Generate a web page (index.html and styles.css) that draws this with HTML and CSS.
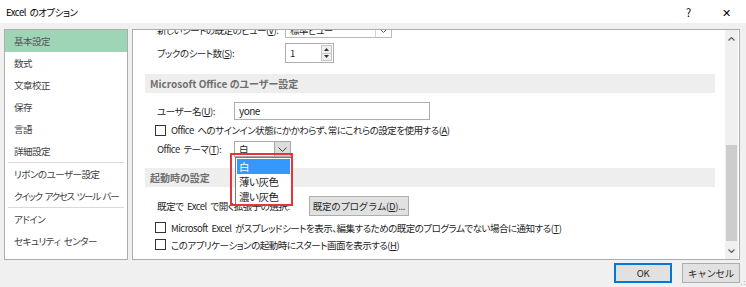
FILE: index.html
```html
<!DOCTYPE html>
<html lang="ja">
<head>
    <meta charset="UTF-8">
    <title>Excel のオプション</title>
    <link rel="stylesheet" href="styles.css">
</head>
<body>
    <div class="titlebar">
        <span class="title">Excel のオプション</span>
        <span class="help">?</span>
        <span class="close">✕</span>
    </div>

    <div class="main">
        <ul class="nav">
            <li class="active">基本設定</li>
            <li>数式</li>
            <li>文章校正</li>
            <li>保存</li>
            <li>言語</li>
            <li>詳細設定</li>
            <li class="sep"></li>
            <li>リボンのユーザー設定</li>
            <li class="tight">クイック アクセス ツール バー</li>
            <li class="sep"></li>
            <li>アドイン</li>
            <li>セキュリティ センター</li>
        </ul>

        <div class="panel">
            <div class="scroll">
                <div class="row first">
                    <span class="label wide">新しいシートの既定のビュー(<u>V</u>):</span>
                    <div class="select view-select">
                        <span class="value">標準ビュー</span>
                        <span class="arrow"><svg width="9" height="5" viewBox="0 0 9 5"><polyline points="0.5,0.5 4.5,4.5 8.5,0.5" fill="none" stroke="#606060" stroke-width="1"/></svg></span>
                    </div>
                </div>
                <div class="row sheets">
                    <span class="label wide">ブックのシート数(<u>S</u>):</span>
                    <div class="spin">
                        <span class="value">1</span>
                        <span class="spin-btns">
                            <span><svg width="5" height="3" viewBox="0 0 5 3"><polygon points="0,3 2.5,0 5,3" fill="#333"/></svg></span>
                            <span><svg width="5" height="3" viewBox="0 0 5 3"><polygon points="0,0 5,0 2.5,3" fill="#333"/></svg></span>
                        </span>
                    </div>
                </div>

                <div class="section">Microsoft Office のユーザー設定</div>

                <div class="row user">
                    <span class="label">ユーザー名(<u>U</u>):</span>
                    <div class="textbox">yone</div>
                </div>
                <div class="row check">
                    <span class="box"></span>
                    <span>Office へのサインイン状態にかかわらず、常にこれらの設定を使用する(<u>A</u>)</span>
                </div>
                <div class="row theme">
                    <span class="label">Office テーマ(<u>T</u>):</span>
                    <div class="select theme-select">
                        <span class="value">白</span>
                        <span class="arrow"><svg width="9" height="5" viewBox="0 0 9 5"><polyline points="0.5,0.5 4.5,4.5 8.5,0.5" fill="none" stroke="#404040" stroke-width="1"/></svg></span>
                        <ul class="dropdown">
                            <li class="picked">白</li>
                            <li>薄い灰色</li>
                            <li>濃い灰色</li>
                        </ul>
                        <div class="mark"></div>
                    </div>
                </div>

                <div class="section start">起動時の設定</div>

                <div class="row program">
                    <span class="label">既定で Excel で開く拡張子の選択:</span>
                    <button class="btn default-btn">既定のプログラム(<u>D</u>)...</button>
                </div>
                <div class="row check low">
                    <span class="box"></span>
                    <span>Microsoft Excel がスプレッドシートを表示、編集するための既定のプログラムでない場合に通知する(<u>T</u>)</span>
                </div>
                <div class="row check low">
                    <span class="box"></span>
                    <span>このアプリケーションの起動時にスタート画面を表示する(<u>H</u>)</span>
                </div>
            </div>

            <div class="scrollbar">
                <span class="sb-arrow"><svg width="7" height="4" viewBox="0 0 7 4"><polyline points="0.5,3.5 3.5,0.5 6.5,3.5" fill="none" stroke="#606060" stroke-width="1.2"/></svg></span>
                <div class="track"><div class="thumb"></div></div>
                <span class="sb-arrow"><svg width="7" height="4" viewBox="0 0 7 4"><polyline points="0.5,0.5 3.5,3.5 6.5,0.5" fill="none" stroke="#606060" stroke-width="1.2"/></svg></span>
            </div>
        </div>
    </div>

    <div class="footer">
        <button class="btn ok">OK</button>
        <button class="btn">キャンセル</button>
        <svg class="grip" width="5" height="5" viewBox="0 0 5 5">
            <rect x="3" y="0" width="1" height="1" fill="#bbb"/>
            <rect x="0" y="3" width="1" height="1" fill="#bbb"/>
            <rect x="3" y="3" width="1" height="1" fill="#bbb"/>
        </svg>
    </div>
</body>
</html>
```

FILE: styles.css
```css
body {
    margin: 0;
    width: 746px;
    height: 287px;
    overflow: hidden;
    background-color: #f0f0f0;
    font-family: "Noto Sans CJK JP", sans-serif;
    font-feature-settings: "palt";
    font-size: 9.5px;
    letter-spacing: -0.5px;
    word-spacing: 2px;
    color: #1e1e1e;
}

u {
    text-underline-offset: 1px;
}

.titlebar {
    height: 23px;
    background-color: #ffffff;
    display: flex;
    align-items: center;
    color: #000;
}

.title {
    margin-left: 6px;
    flex: 1;
}

.help {
    width: 12px;
    font-size: 11px;
}

.close {
    width: 10px;
    margin-left: 24px;
    margin-right: 14px;
    font-size: 11px;
}

.main {
    display: flex;
    gap: 4px;
    padding: 6px 6px 0 4px;
    height: 231px;
}

.nav {
    list-style: none;
    margin: 0;
    padding: 0;
    width: 122px;
    background-color: #ffffff;
    border: 1px solid #adadad;
    color: #404040;
}

.nav li {
    height: 22px;
    line-height: 22px;
    padding-left: 9px;
    white-space: nowrap;
}

.nav li.tight {
    letter-spacing: -1.3px;
}

.nav li.active {
    background-color: #9fd5b7;
    color: #555;
}

.nav li.sep {
    height: 1px;
    margin: 0 3px;
    padding: 0;
    background-color: #d9d9d9;
}

.panel {
    flex: 1;
    display: flex;
    background-color: #ffffff;
    border: 1px solid #adadad;
    overflow: hidden;
}

.scroll {
    flex: 1;
    overflow: hidden;
    padding: 0 10px 0 12px;
}

.row {
    display: flex;
    align-items: center;
    padding-left: 12px;
    height: 18px;
    white-space: nowrap;
}

.row.first {
    height: 20px;
    margin-top: -10px;
}

.row.sheets {
    height: 20px;
    margin-top: 3px;
}

.label {
    width: 77px;
}

.label.wide {
    width: 128px;
}

.select {
    position: relative;
    display: flex;
    height: 16px;
    box-sizing: border-box;
    border: 1px solid #b9b9b9;
    background-color: #ffffff;
}

.select .value {
    flex: 1;
    padding-left: 4px;
    line-height: 14px;
}

.select .arrow {
    width: 15px;
    display: flex;
    align-items: center;
    justify-content: center;
    border-left: 1px solid #d4d4d4;
}

.view-select {
    width: 107px;
}

.theme-select {
    width: 57px;
    border-color: #a8a8a8;
}

.theme-select .arrow {
    background-color: #dcdcdc;
    border-left-color: #a8a8a8;
}

.spin {
    display: flex;
    width: 49px;
    height: 20px;
    box-sizing: border-box;
    border: 1px solid #adadad;
}

.spin .value {
    flex: 1;
    padding-left: 4px;
    line-height: 18px;
}

.spin-btns {
    width: 11px;
    display: flex;
    flex-direction: column;
    margin: 1px;
}

.spin-btns span {
    flex: 1;
    display: flex;
    align-items: center;
    justify-content: center;
    background-color: #efefef;
    border: 1px solid #c6c6c6;
}

.spin-btns span + span {
    border-top: none;
}

.section {
    margin-top: 11px;
    height: 19px;
    line-height: 19px;
    padding-left: 5px;
    background-color: #eeeeee;
    color: #6f6f6f;
    font-size: 10px;
    font-weight: bold;
    letter-spacing: 0;
    word-spacing: 0;
}

.section.start {
    margin-top: 10px;
}

.row.user {
    margin-top: 9px;
}

.textbox {
    width: 196px;
    height: 18px;
    box-sizing: border-box;
    border: 1px solid #adadad;
    padding-left: 4px;
    line-height: 16px;
    font-size: 10px;
}

.row.check {
    margin-top: 1px;
}

.row.check.low {
    margin-top: 0;
    height: 17px;
}

.row.program + .row.check {
    margin-top: 3px;
}

.box {
    width: 11px;
    height: 11px;
    box-sizing: border-box;
    border: 1px solid #333;
    margin-left: -2px;
    margin-right: 5px;
}

.row.theme {
    margin-top: 1px;
    position: relative;
    z-index: 2;
}

.dropdown {
    position: absolute;
    top: 15px;
    left: 0;
    width: 57px;
    box-sizing: border-box;
    margin: 0;
    padding: 1px;
    list-style: none;
    background-color: #ffffff;
    border: 1px solid #7a7a7a;
}

.dropdown li {
    height: 15px;
    line-height: 15px;
    padding-left: 2px;
    font-size: 10.5px;
}

.dropdown li.picked {
    background-color: #3399ff;
    color: #ffffff;
}

.mark {
    position: absolute;
    top: 11px;
    left: -5px;
    width: 63px;
    height: 53px;
    box-sizing: border-box;
    border: 2px solid #e8333a;
}

.row.program {
    margin-top: 9px;
    height: 20px;
}

.row.program .label {
    width: 152px;
}

.btn {
    font-family: inherit;
    font-size: 9.5px;
    letter-spacing: -0.3px;
    color: #262626;
    background-color: #e1e1e1;
    border: 1px solid #adadad;
    padding: 0;
    height: 20px;
    white-space: nowrap;
}

.default-btn {
    width: 100px;
}

.scrollbar {
    width: 13px;
    display: flex;
    flex-direction: column;
    background-color: #f0f0f0;
    margin-right: 1px;
}

.sb-arrow {
    height: 17px;
    display: flex;
    align-items: center;
    justify-content: center;
}

.track {
    flex: 1;
    display: flex;
    flex-direction: column;
    justify-content: flex-end;
    padding: 0 1px 1px;
}

.thumb {
    height: 96px;
    background-color: #cdcdcd;
}

.footer {
    display: flex;
    justify-content: flex-end;
    gap: 10px;
    padding: 3px 6px 0 0;
    position: relative;
}

.footer .btn {
    width: 58px;
}

.footer .btn.ok {
    border-color: #0078d7;
    box-shadow: inset 0 0 0 1px #0078d7;
}

.grip {
    position: absolute;
    right: 0;
    bottom: -3px;
}
```
